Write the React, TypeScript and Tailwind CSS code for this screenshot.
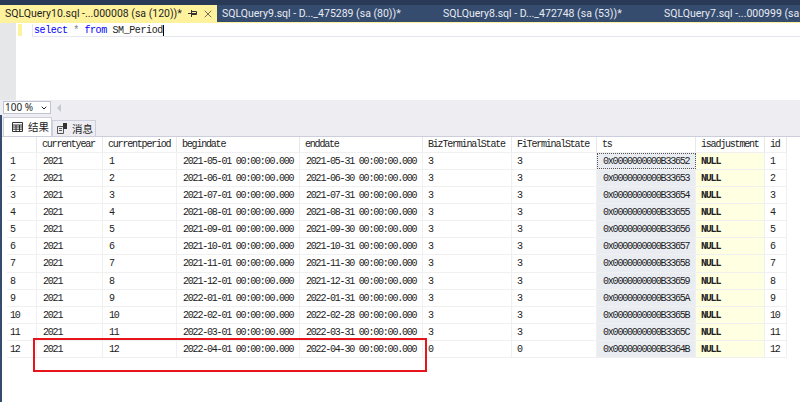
import { ChevronDown, X } from "lucide-react"

const columns = [
  { name: "", width: "w-[30px]" },
  { name: "currentyear", width: "w-[66px]" },
  { name: "currentperiod", width: "w-[74px]" },
  { name: "begindate", width: "w-[123px]" },
  { name: "enddate", width: "w-[123px]" },
  { name: "BizTerminalState", width: "w-[89px]" },
  { name: "FiTerminalState", width: "w-[85px]" },
  { name: "ts", width: "w-[99px]" },
  { name: "isadjustment", width: "w-[69px]" },
  { name: "id", width: "w-[22px]" },
]

const rows = [
  ["1", "2021", "1", "2021-05-01 00:00:00.000", "2021-05-31 00:00:00.000", "3", "3", "0x0000000000B33652", "NULL", "1"],
  ["2", "2021", "2", "2021-06-01 00:00:00.000", "2021-06-30 00:00:00.000", "3", "3", "0x0000000000B33653", "NULL", "2"],
  ["3", "2021", "3", "2021-07-01 00:00:00.000", "2021-07-31 00:00:00.000", "3", "3", "0x0000000000B33654", "NULL", "3"],
  ["4", "2021", "4", "2021-08-01 00:00:00.000", "2021-08-31 00:00:00.000", "3", "3", "0x0000000000B33655", "NULL", "4"],
  ["5", "2021", "5", "2021-09-01 00:00:00.000", "2021-09-30 00:00:00.000", "3", "3", "0x0000000000B33656", "NULL", "5"],
  ["6", "2021", "6", "2021-10-01 00:00:00.000", "2021-10-31 00:00:00.000", "3", "3", "0x0000000000B33657", "NULL", "6"],
  ["7", "2021", "7", "2021-11-01 00:00:00.000", "2021-11-30 00:00:00.000", "3", "3", "0x0000000000B33658", "NULL", "7"],
  ["8", "2021", "8", "2021-12-01 00:00:00.000", "2021-12-31 00:00:00.000", "3", "3", "0x0000000000B33659", "NULL", "8"],
  ["9", "2021", "9", "2022-01-01 00:00:00.000", "2022-01-31 00:00:00.000", "3", "3", "0x0000000000B3365A", "NULL", "9"],
  ["10", "2021", "10", "2022-02-01 00:00:00.000", "2022-02-28 00:00:00.000", "3", "3", "0x0000000000B3365B", "NULL", "10"],
  ["11", "2021", "11", "2022-03-01 00:00:00.000", "2022-03-31 00:00:00.000", "3", "3", "0x0000000000B3365C", "NULL", "11"],
  ["12", "2021", "12", "2022-04-01 00:00:00.000", "2022-04-30 00:00:00.000", "0", "0", "0x0000000000B3364B", "NULL", "12"],
]

const tabs = [
  { label: "SQLQuery9.sql - D..._475289 (sa (80))*", width: "w-[221px]" },
  { label: "SQLQuery8.sql - D..._472748 (sa (53))*", width: "w-[221px]" },
  { label: "SQLQuery7.sql -...000999 (sa", width: "w-[136px]" },
]

function cellBg(col: number) {
  if (col === 7) return "bg-[#e9edf2]"
  if (col === 8) return "bg-[#ffffe1]"
  return ""
}

function cellPad(col: number) {
  if (col === 0) return "pl-[3px]"
  if (col <= 4 || col === 7) return "pl-[6px]"
  return "pl-[5px]"
}

export default function App() {
  return (
    <div className="relative w-[800px] h-[402px] overflow-hidden bg-white font-['Liberation_Mono',monospace] text-[10px] tracking-[-1.2px] text-[#222]">
      <div className="h-[5px] bg-[#293a56]" />

      {/* tabs */}
      <div className="flex h-[17px] bg-[#364c6f] font-['Roboto',sans-serif] text-[10.500px] tracking-normal leading-[18px] text-[#e6ebf2]">
        <div className="flex w-[217px] shrink-0 items-center bg-[#fff29d] pl-[5px] pr-[3px] text-[#1e1e1e]">
          <span className="flex-1 whitespace-nowrap">SQLQuery10.sql -...000008 (sa (120))*</span>
          <svg width="9" height="7" viewBox="0 0 9 7" className="mr-[5px]">
            <path d="M0 3.500h3M3.500 0v7M3.500 1.500h5v3h-5M3.500 3.500h5" fill="none" stroke="#333" />
          </svg>
          <X size={12} strokeWidth={1.5} className="text-[#444]" />
        </div>
        {tabs.map((tab) => (
          <div key={tab.label} className={`${tab.width} shrink-0 whitespace-nowrap pl-[5px]`}>
            {tab.label}
          </div>
        ))}
      </div>
      <div className="h-[1px] bg-[#fff29d]" />

      {/* editor */}
      <div className="flex h-[77px]">
        <div className="w-[16px] bg-[#e6e7e8]" />
        <div className="ml-[2px] mt-[1px] h-[12px] w-[4px] bg-[#fff29d]" />
        <div className="ml-[10px] flex-1">
          <div className="mt-[1px] flex h-[13px] items-center whitespace-pre border-b border-l border-[#e6e6ee] pl-[1px] text-[10px] tracking-[-0.4px] text-[#222]">
            <span className="text-[#0000ff]">select</span>
            <span className="text-[#808080]"> * </span>
            <span className="text-[#0000ff]">from</span>
            <span> SM_Period</span>
            <span className="h-[11px] w-[1px] bg-black" />
          </div>
        </div>
      </div>

      {/* zoom strip */}
      <div className="flex h-[15px] items-center bg-[#eeeef2] pl-[3px]">
        <div className="flex h-[13px] w-[48px] items-center justify-between border border-[#bfc5d0] bg-white pl-[1px] pr-[2px] font-['Noto_Sans',sans-serif] text-[10px] tracking-normal text-[#1e1e1e]">
          100 %
          <ChevronDown size={8} strokeWidth={3} />
        </div>
        <div className="ml-[6px] h-0 w-0 border-y-[4px] border-r-[4px] border-y-transparent border-r-[#c4c8d0]" />
      </div>

      {/* results */}
      <div className="flex h-[287px]">
        <div className="w-[2px] bg-[#364c6f]" />
        <div className="flex-1 bg-white">
          <div className="flex h-[21px] items-end bg-[#eeeef2] pl-[1px] font-['Noto_Sans_CJK_SC',sans-serif] text-[10.500px] tracking-normal">
            <div className="flex h-[19px] w-[49px] items-center gap-[5px] border border-b-0 border-[#cccedb] bg-white pl-[8px]">
              <svg width="11" height="10" viewBox="0 0 11 10" className="shrink-0">
                <path d="M.5.5h10v9H.5zM.5 3h10M.5 5h10M.5 7.200h10M4 3v6.500M7.500 3v6.500" fill="none" stroke="#333" />
              </svg>
              结果
            </div>
            <div className="flex h-[16px] w-[44px] items-center gap-[4px] border border-b-0 border-[#cccedb] pl-[4px]">
              <svg width="11" height="11" viewBox="0 0 11 11" className="shrink-0">
                <path d="M.5 3.500h6v7h-6zM2 5.500h3M2 7.500h3" fill="none" stroke="#555" />
                <path d="M6 0h4v6H6z" fill="#333" />
              </svg>
              消息
            </div>
          </div>
          <div className="h-[1px] bg-[#cccedb]" />

          <div className="ml-[5px] w-fit">
            <div className="flex h-[16px] border-b border-[#f0f0f0] bg-white pt-[1px] leading-[14px]">
              {columns.map((col) => (
                <div key={col.name} className={`${col.width} -mt-[1px] shrink-0 border-r border-[#e8e8e8] pl-[5px] pt-[1px] whitespace-nowrap`}>
                  {col.name}
                </div>
              ))}
            </div>
            {rows.map((row) => (
              <div key={row[0]} className="flex h-[17.090px] border-b border-[#f0f0f0] leading-[15px]">
                {row.map((value, col) => (
                  <div
                    key={col}
                    className={`${columns[col].width} ${cellBg(col)} ${cellPad(col)} ${col === 7 && row[0] === "1" ? "outline-1 -outline-offset-1 outline-dotted outline-[#555]" : ""} ${col === 8 ? "font-bold" : ""} shrink-0 whitespace-nowrap border-r border-[#f0f0f0] pt-[1px]`}
                  >
                    {value}
                  </div>
                ))}
              </div>
            ))}
          </div>
        </div>
      </div>

      {/* annotation */}
      <div className="absolute left-[33px] top-[338px] h-[34px] w-[394px] border-2 border-[#e8141c]" />
    </div>
  )
}
